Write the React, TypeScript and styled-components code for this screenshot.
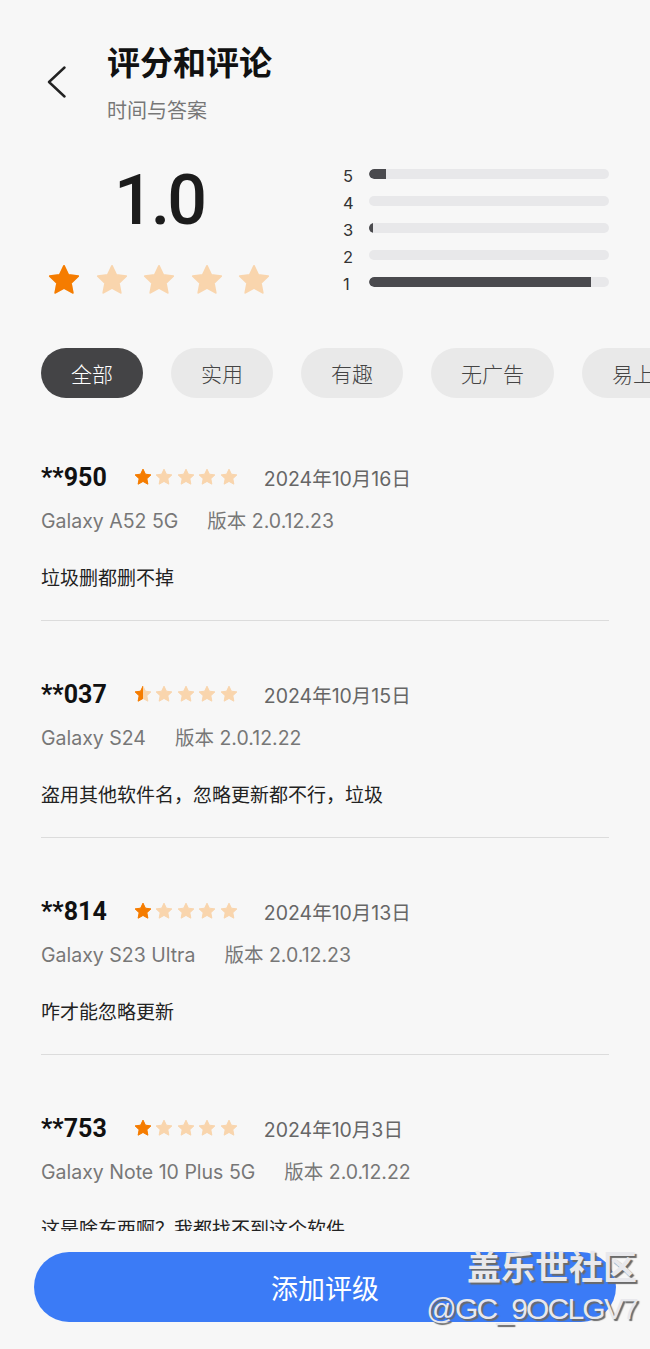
import React, { useId } from "react";
import styled, { createGlobalStyle } from "styled-components";

const Global = createGlobalStyle`
  html, body { margin: 0; padding: 0; background: #f7f7f7; }
  * { box-sizing: border-box; }
  body { font-family: Roboto, "Noto Sans CJK SC", sans-serif; }
`;

const Page = styled.div`
  position: relative;
  width: 650px;
  height: 1349px;
  display: flex;
  flex-direction: column;
  background: #f7f7f7;
  overflow: hidden;
`;

const Scroll = styled.div`
  flex: 1;
  overflow: hidden;
  min-height: 0;
`;

const Header = styled.header`
  display: flex;
  align-items: flex-start;
  padding: 44px 0 0 47px;
`;

const BackButton = styled.button`
  width: 60px;
  height: 32px;
  padding: 0;
  margin-top: 22px;
  border: none;
  background: none;
  display: flex;
  align-items: center;
  justify-content: flex-start;
`;

const TitleBlock = styled.div`
  display: flex;
  flex-direction: column;
  gap: 13px;
`;

const Title = styled.h1`
  margin: 0;
  font-size: 33px;
  line-height: 40px;
  font-weight: 700;
  color: #111;
`;

const Subtitle = styled.div`
  font-size: 20px;
  line-height: 28px;
  color: #777;
`;

const RatingSection = styled.section`
  display: flex;
  margin-top: 35px;
  padding-left: 47px;
`;

const Summary = styled.div`
  width: 224px;
  display: flex;
  flex-direction: column;
  align-items: center;
`;

const Score = styled.div`
  font-size: 70px;
  line-height: 80px;
  font-weight: 500;
  letter-spacing: -3px;
  color: #1c1c1c;
`;

const StarRow = styled.div<{ $gap: number }>`
  display: flex;
  gap: ${(p) => p.$gap}px;
  margin-top: ${(p) => (p.$gap > 10 ? 22 : 0)}px;
`;

const Bars = styled.div`
  margin-left: 72px;
  display: flex;
  flex-direction: column;
`;

const BarRow = styled.div`
  display: flex;
  align-items: center;
  height: 27px;
`;

const BarLabel = styled.span`
  width: 26px;
  font-family: Inter, sans-serif;
  font-size: 16.5px;
  color: #333;
  padding-top: 5px;
`;

const Track = styled.div`
  width: 240px;
  height: 10px;
  border-radius: 5px;
  background: #e8e8ea;
  overflow: hidden;
`;

const Fill = styled.div`
  height: 100%;
  border-radius: 5px 0 0 5px;
  background: #4a4a4e;
`;

const Chips = styled.div`
  display: flex;
  gap: 28px;
  padding-left: 41px;
  margin-top: 50px;
  overflow: hidden;
  white-space: nowrap;
`;

const Chip = styled.div<{ $active?: boolean }>`
  flex-shrink: 0;
  height: 50px;
  padding: 0 30px;
  border-radius: 25px;
  display: flex;
  align-items: center;
  font-family: "Noto Sans CJK SC", sans-serif;
  font-size: 21px;
  font-weight: 300;
  background: ${(p) => (p.$active ? "#444446" : "#e9e9e9")};
  color: ${(p) => (p.$active ? "#fff" : "#444")};
`;

const List = styled.div`
  padding: 6px 41px 0;
`;

const Review = styled.article`
  padding: 58px 0 29px;
  border-bottom: 1px solid #dcdcdc;
`;

const ReviewHead = styled.div`
  display: flex;
  align-items: center;
  height: 30px;
`;

const Name = styled.span`
  font-size: 25px;
  font-weight: 700;
  color: #111;
  margin-right: 26px;
`;

const DateText = styled.span`
  font-family: Inter, "Noto Sans CJK SC", sans-serif;
  font-size: 19.5px;
  color: #666;
  margin-left: 25px;
`;

const Device = styled.div`
  display: flex;
  gap: 29px;
  margin-top: 15px;
  font-family: Inter, "Noto Sans CJK SC", sans-serif;
  font-size: 19.5px;
  line-height: 28px;
  color: #777;
`;

const Body = styled.p`
  margin: 28px 0 0;
  font-family: "Noto Sans CJK SC", sans-serif;
  font-size: 19px;
  line-height: 28px;
  color: #222;
`;

const BottomBar = styled.div`
  height: 118px;
  padding-top: 21px;
  display: flex;
  justify-content: center;
  background: #f7f7f7;
`;

const AddButton = styled.button`
  width: 582px;
  height: 70px;
  border: none;
  border-radius: 35px;
  background: #3b7bf6;
  color: #fff;
  font-family: "Noto Sans CJK SC", sans-serif;
  font-size: 27px;
`;

const Watermark = styled.div`
  position: absolute;
  right: 13px;
  bottom: 22px;
  display: flex;
  flex-direction: column;
  align-items: flex-end;
  color: #e8e8ec;
  text-shadow: 2px 2px 1px #6a6a6a;
  pointer-events: none;
`;

const WmTitle = styled.div`
  font-family: "Noto Sans CJK SC", sans-serif;
  font-size: 34px;
  font-weight: 700;
  line-height: 38px;
`;

const WmId = styled.div`
  font-family: "Liberation Sans", sans-serif;
  font-size: 30px;
  line-height: 36px;
  letter-spacing: -1.8px;
  margin-top: 6px;
`;

const STAR =
  "M12 2.6l2.85 6.05 6.6.8-4.87 4.55 1.25 6.55L12 17.3l-5.83 3.25 1.25-6.55L2.55 9.45l6.6-.8z";

function Star({ size, fill }: { size: number; fill: number }) {
  const id = useId();
  const on = "#f57c00";
  const off = "#f9d5ad";
  return (
    <svg width={size} height={size} viewBox="0 0 24 24">
      <defs>
        <clipPath id={id}>
          <rect x="0" y="0" width={24 * fill} height="24" />
        </clipPath>
      </defs>
      <path d={STAR} fill={off} stroke={off} strokeWidth="1.2" strokeLinejoin="round" />
      {fill > 0 && (
        <path
          d={STAR}
          fill={on}
          stroke={on}
          strokeWidth="1.2"
          strokeLinejoin="round"
          clipPath={`url(#${id})`}
        />
      )}
    </svg>
  );
}

function Stars({ value, size, gap }: { value: number; size: number; gap: number }) {
  return (
    <StarRow $gap={gap}>
      {[0, 1, 2, 3, 4].map((i) => (
        <Star key={i} size={size} fill={Math.max(0, Math.min(1, value - i))} />
      ))}
    </StarRow>
  );
}

const bars = [
  { label: "5", pct: 7 },
  { label: "4", pct: 0 },
  { label: "3", pct: 1.5 },
  { label: "2", pct: 0 },
  { label: "1", pct: 92.5 },
];

const chips = ["全部", "实用", "有趣", "无广告", "易上手"];

const reviews = [
  { name: "**950", stars: 1, date: "2024年10月16日", device: "Galaxy A52 5G", ver: "版本 2.0.12.23", text: "垃圾删都删不掉" },
  { name: "**037", stars: 0.5, date: "2024年10月15日", device: "Galaxy S24", ver: "版本 2.0.12.22", text: "盗用其他软件名，忽略更新都不行，垃圾" },
  { name: "**814", stars: 1, date: "2024年10月13日", device: "Galaxy S23 Ultra", ver: "版本 2.0.12.23", text: "咋才能忽略更新" },
  { name: "**753", stars: 1, date: "2024年10月3日", device: "Galaxy Note 10 Plus 5G", ver: "版本 2.0.12.22", text: "这是啥东西啊？我都找不到这个软件" },
];

export default function App() {
  return (
    <>
      <Global />
      <Page>
        <Scroll>
          <Header>
            <BackButton aria-label="返回">
              <svg width="20" height="32" viewBox="0 0 20 32">
                <path d="M17.5 1.5 L2 16 L17.5 30.5" fill="none" stroke="#222" strokeWidth="2.4" strokeLinecap="round" strokeLinejoin="round" />
              </svg>
            </BackButton>
            <TitleBlock>
              <Title>评分和评论</Title>
              <Subtitle>时间与答案</Subtitle>
            </TitleBlock>
          </Header>

          <RatingSection>
            <Summary>
              <Score>1.0</Score>
              <Stars value={1} size={36} gap={11.5} />
            </Summary>
            <Bars>
              {bars.map((b) => (
                <BarRow key={b.label}>
                  <BarLabel>{b.label}</BarLabel>
                  <Track>
                    <Fill style={{ width: `${b.pct}%` }} />
                  </Track>
                </BarRow>
              ))}
            </Bars>
          </RatingSection>

          <Chips>
            {chips.map((c, i) => (
              <Chip key={c} $active={i === 0}>
                {c}
              </Chip>
            ))}
          </Chips>

          <List>
            {reviews.map((r) => (
              <Review key={r.name}>
                <ReviewHead>
                  <Name>{r.name}</Name>
                  <Stars value={r.stars} size={20} gap={1.5} />
                  <DateText>{r.date}</DateText>
                </ReviewHead>
                <Device>
                  <span>{r.device}</span>
                  <span>{r.ver}</span>
                </Device>
                <Body>{r.text}</Body>
              </Review>
            ))}
          </List>
        </Scroll>
        <BottomBar>
          <AddButton>添加评级</AddButton>
        </BottomBar>
        <Watermark>
          <WmTitle>盖乐世社区</WmTitle>
          <WmId>@GC_9OCLGV7</WmId>
        </Watermark>
      </Page>
    </>
  );
}
